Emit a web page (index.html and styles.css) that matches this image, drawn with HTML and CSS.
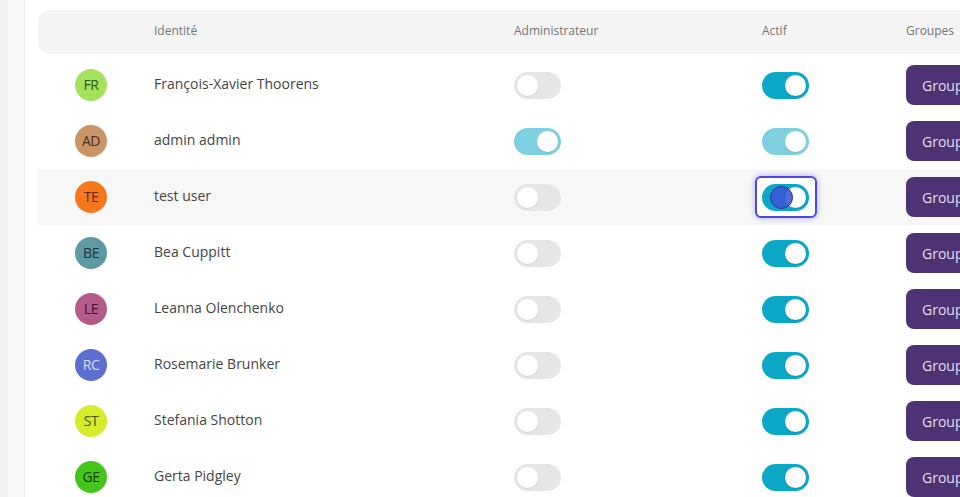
FILE: index.html
```html
<!DOCTYPE html>
<html lang="fr">
<head>
<meta charset="utf-8">
<title>Utilisateurs</title>
<link rel="stylesheet" href="styles.css">
</head>
<body>
<div class="card">
  <div class="table">
    <div class="row head">
      <div></div>
      <div>Identité</div>
      <div>Administrateur</div>
      <div>Actif</div>
      <div>Groupes</div>
    </div>
    <div class="row">
      <div><span class="avatar av-fr">FR</span></div>
      <div class="name">François-Xavier Thoorens</div>
      <div><span class="toggle"></span></div>
      <div><span class="toggle on"></span></div>
      <div><button class="group">Groupes</button></div>
    </div>
    <div class="row">
      <div><span class="avatar av-ad">AD</span></div>
      <div class="name">admin admin</div>
      <div><span class="toggle on dim"></span></div>
      <div><span class="toggle on dim"></span></div>
      <div><button class="group">Groupes</button></div>
    </div>
    <div class="row hover">
      <div><span class="avatar av-te">TE</span></div>
      <div class="name">test user</div>
      <div><span class="toggle"></span></div>
      <div><span class="focus"><span class="toggle on"><span class="press"></span></span></span></div>
      <div><button class="group">Groupes</button></div>
    </div>
    <div class="row">
      <div><span class="avatar av-be">BE</span></div>
      <div class="name">Bea Cuppitt</div>
      <div><span class="toggle"></span></div>
      <div><span class="toggle on"></span></div>
      <div><button class="group">Groupes</button></div>
    </div>
    <div class="row">
      <div><span class="avatar av-le">LE</span></div>
      <div class="name">Leanna Olenchenko</div>
      <div><span class="toggle"></span></div>
      <div><span class="toggle on"></span></div>
      <div><button class="group">Groupes</button></div>
    </div>
    <div class="row">
      <div><span class="avatar av-rc">RC</span></div>
      <div class="name">Rosemarie Brunker</div>
      <div><span class="toggle"></span></div>
      <div><span class="toggle on"></span></div>
      <div><button class="group">Groupes</button></div>
    </div>
    <div class="row">
      <div><span class="avatar av-st">ST</span></div>
      <div class="name">Stefania Shotton</div>
      <div><span class="toggle"></span></div>
      <div><span class="toggle on"></span></div>
      <div><button class="group">Groupes</button></div>
    </div>
    <div class="row">
      <div><span class="avatar av-ge">GE</span></div>
      <div class="name">Gerta Pidgley</div>
      <div><span class="toggle"></span></div>
      <div><span class="toggle on"></span></div>
      <div><button class="group">Groupes</button></div>
    </div>
  </div>
</div>
</body>
</html>
```

FILE: styles.css
```css
* { box-sizing: border-box; }
html, body { margin: 0; height: 100%; }
body {
  background: linear-gradient(to right, #f2f2f2 0, #f2f2f2 8px, #f8f8f8 8px);
  font-family: "Open Sans", "DejaVu Sans", sans-serif;
  overflow: hidden;
  width: 960px;
  height: 497px;
}
.card {
  margin-left: 24px;
  height: 100%;
  background: #fff;
  border-left: 1px solid #ececec;
  padding: 10px 0 0 13px;
}
.table { width: 1000px; }
.row {
  display: grid;
  grid-template-columns: 79px 360px 248px 144px 1fr;
  align-items: center;
  height: 56px;
  padding-left: 37px;
  color: #454545;
  font-size: 14px;
  line-height: 18px;
}
.name { padding-bottom: 2px; }
.row.head {
  height: 44px;
  margin-bottom: 3px;
  background: #f4f4f4;
  border-radius: 12px 0 0 12px;
  color: #747474;
  font-size: 12px;
  font-weight: 500;
}
.row.head > div { padding-bottom: 2px; }
.row.hover { background: #f7f7f7; }
.avatar {
  display: flex;
  align-items: center;
  justify-content: center;
  width: 32px;
  height: 32px;
  border-radius: 50%;
  font-size: 14px;
  letter-spacing: -0.4px;
}
.av-fr { background: #a4e15c; color: #2f5a12; }
.av-ad { background: #c99467; color: #4a3020; }
.av-te { background: #f5791c; color: #5a2a06; }
.av-be { background: #5f99a3; color: #18343a; }
.av-le { background: #b55b8a; color: #3f1530; }
.av-rc { background: #5b6fd0; color: #d8dcf5; }
.av-st { background: #d5eb2c; color: #4a5408; }
.av-ge { background: #45c41b; color: #134008; }
.toggle {
  position: relative;
  display: block;
  width: 47px;
  height: 27px;
  border-radius: 14px;
  background: #e6e6e6;
}
.toggle::after {
  content: "";
  position: absolute;
  top: 3px;
  left: 3px;
  width: 21px;
  height: 21px;
  border-radius: 50%;
  background: #fff;
  box-shadow: 0 1px 2px rgba(0,0,0,0.08);
}
.toggle.on { background: #0aa7c7; }
.toggle.on::after { left: 23px; }
.toggle.dim { background: #7ed0e0; }
.focus {
  display: block;
  width: 62px;
  height: 42px;
  margin-left: -7px;
  padding: 6px 0 0 5px;
  border: 2px solid #5046e0;
  border-radius: 6px;
  background: #fff;
  box-shadow: 0 0 6px rgba(80,70,224,0.45);
}
.press {
  position: absolute;
  z-index: 1;
  top: 2px;
  left: 8px;
  width: 23px;
  height: 23px;
  border-radius: 50%;
  background: rgba(58, 86, 214, 0.88);
  border: 1.5px solid #2e2f9a;
}
.group {
  font-family: inherit;
  font-size: 14px;
  color: #e4def0;
  background: #4e3374;
  border: 0;
  border-radius: 8px;
  height: 40px;
  padding: 0 16px;
  width: 110px;
  text-align: left;
}
```
